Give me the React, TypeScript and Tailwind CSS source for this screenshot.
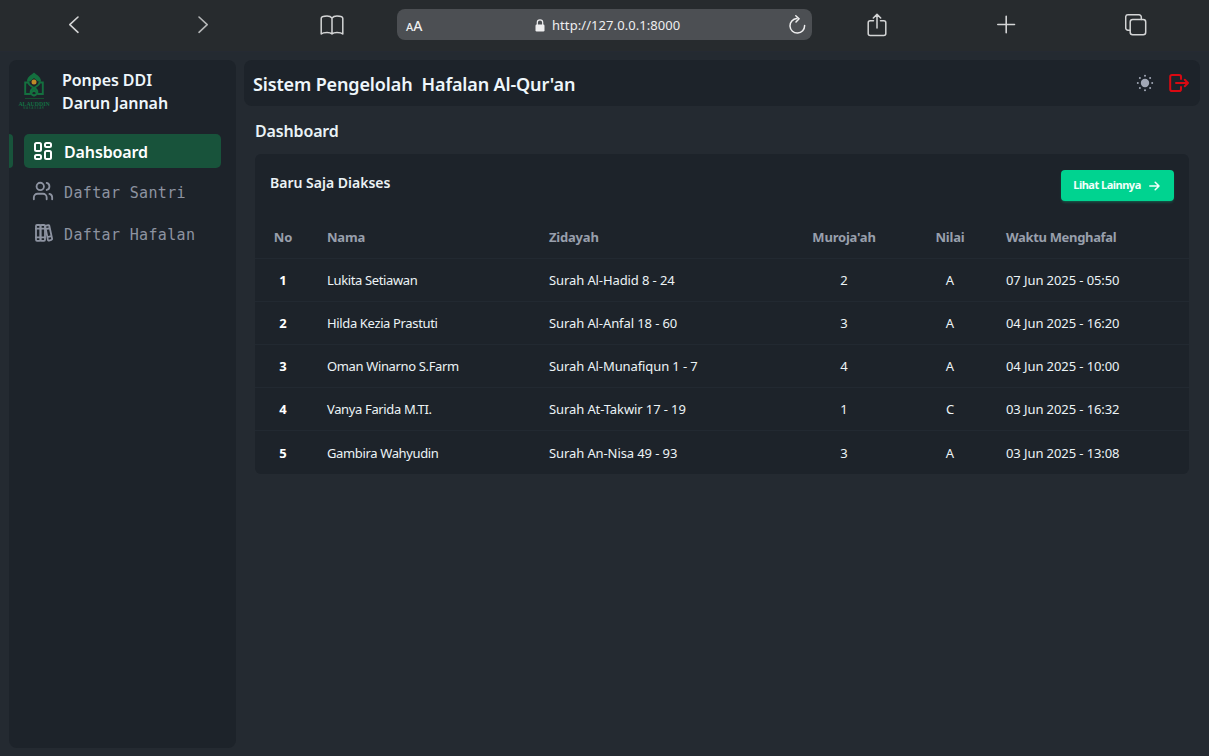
import React from "react";
import { Users } from "lucide-react";

type Row = { name: string; surah: string; repeat: number; grade: string; time: string };

const rows: Row[] = [
  { name: "Lukita Setiawan", surah: "Surah Al-Hadid 8 - 24", repeat: 2, grade: "A", time: "07 Jun 2025 - 05:50" },
  { name: "Hilda Kezia Prastuti", surah: "Surah Al-Anfal 18 - 60", repeat: 3, grade: "A", time: "04 Jun 2025 - 16:20" },
  { name: "Oman Winarno S.Farm", surah: "Surah Al-Munafiqun 1 - 7", repeat: 4, grade: "A", time: "04 Jun 2025 - 10:00" },
  { name: "Vanya Farida M.TI.", surah: "Surah At-Takwir 17 - 19", repeat: 1, grade: "C", time: "03 Jun 2025 - 16:32" },
  { name: "Gambira Wahyudin", surah: "Surah An-Nisa 49 - 93", repeat: 3, grade: "A", time: "03 Jun 2025 - 13:08" },
];

const line = { fill: "none", stroke: "currentColor", strokeLinecap: "round", strokeLinejoin: "round" } as const;

function BrowserBar() {
  return (
    <div className="flex h-[52px] shrink-0 items-center border-b border-[#252a33] bg-[#272b2e] pb-[2px] text-[#d4d5d6]">
      <svg className="ml-[64px] h-5 w-5" viewBox="0 0 20 20" strokeWidth="1.6" {...line}><path d="M14 2 5.800 9.700 14 17.300" /></svg>
      <svg className="ml-[109px] h-5 w-5 text-[#b5b7b8]" viewBox="0 0 20 20" strokeWidth="1.6" {...line}><path d="M6 2 14.200 9.700 6 17.300" /></svg>
      <svg className="ml-[107px] h-[22px] w-6" viewBox="0 0 24 22" strokeWidth="1.5" {...line}>
        <path d="M12 4C10.800 2.400 8.800 2 7 2 4.400 2 1.200 2.500 1.200 4.500v15.500C2.500 18.800 5 18.500 7 18.500s4 .4 5 1.500c1-1.100 3-1.500 5-1.500s4.500.3 5.800 1.500V4.500C22.800 2.500 19.600 2 17 2c-1.800 0-3.800.4-5 2Zm0 0v16" />
      </svg>
      <div className="ml-[53px] flex h-[31px] w-[415px] items-center rounded-[8px] bg-[#4c4f53] text-[#eeeeef]">
        <span className="ml-[9px] mt-[2px] flex w-[18px] items-baseline font-medium leading-none"><span className="text-[11px]">A</span><span className="text-[14px]">A</span></span>
        <svg className="ml-[111px] mt-[1px] h-[13px] w-[10px]" viewBox="0 0 10 13"><rect x=".5" y="5.500" width="9" height="7" rx="1.200" fill="currentColor" /><path d="M2.300 6V3.500a2.700 2.700 0 0 1 5.400 0V6" fill="none" stroke="currentColor" strokeWidth="1.200" /></svg>
        <span className="ml-[7px] mt-[2px] w-[130px] whitespace-nowrap text-[13px] tracking-[0.07px]">http://127.0.0.1:8000</span>
        <svg className="ml-auto mr-[5px] h-5 w-5" viewBox="0 0 20 20" strokeWidth="1.500" {...line}><path d="M9.800 3.500A7.300 7.300 0 1 0 17.600 10.500M8.800.8l3.300 2.900-3.100 3.200" /></svg>
      </div>
      <svg className="ml-[55px] h-6 w-5" viewBox="0 0 20 24" strokeWidth="1.500" {...line}><path d="M6.500 7.800H3.200a2 2 0 0 0-2 2v10.700a2 2 0 0 0 2 2h13.600a2 2 0 0 0 2-2V9.800a2 2 0 0 0-2-2h-3.300M10 15V1.500M6.300 5 10 1.400 13.700 5" /></svg>
      <svg className="ml-[109px] h-5 w-5" viewBox="0 0 20 20" strokeWidth="1.600" {...line}><path d="M1.800 9.500h16.700M10.200 1.300v16.500" /></svg>
      <svg className="ml-[109px] h-[22px] w-[22px]" viewBox="0 0 22 22" strokeWidth="1.500" {...line}><rect x="5.200" y="5.400" width="15.500" height="15.300" rx="2.500" /><path d="M5.200 16.200H3a2.300 2.300 0 0 1-2.300-2.300V3A2.300 2.300 0 0 1 3 .8h11a2.300 2.300 0 0 1 2.300 2.300v2.300" /></svg>
    </div>
  );
}

function Logo() {
  return (
    <div className="relative h-[39px] w-[30px] shrink-0 leading-none">
      <svg className="ml-[5px] h-[25px] w-[20px]" viewBox="0 0 20 25">
        <path d="M10 .5C13 3.500 17 4.500 17 9.500h-3L10 6 6 9.500H3C3 4.500 7 3.500 10 .5Z" fill="#14703f" />
        <g fill="none" stroke="#14703f" strokeWidth="1.900">
          <path d="M4.500 10.500H1.200V22H6l4-4.200 4 4.200h4.800V10.500h-3.300" />
          <path d="M4.200 9.500c0 5 5.800 4.500 5.800 8M15.800 9.500c0 5-5.800 4.500-5.800 8" />
          <path d="M10 15.500c-4.500 3-4.500 6 0 8.200 4.500-2.200 4.500-5.200 0-8.200Z" />
        </g>
        <circle cx="10" cy="10" r="2.500" fill="#c08a28" />
      </svg>
      <div className="mx-auto mt-[1px] h-px w-[19px] bg-[#16502f]" />
      <svg className="mt-px h-[10px] w-[30px] overflow-visible" viewBox="0 0 30 10">
        <text x="15" y="5.500" textAnchor="middle" fontFamily="Liberation Serif, serif" fontSize="5.800" fontWeight="700" fill="#147044">ALAUDDIN</text>
        <text x="15" y="9" textAnchor="middle" fontFamily="Liberation Sans, sans-serif" fontSize="2.600" letterSpacing=".9" fill="#177045">MAKASSAR</text>
      </svg>
    </div>
  );
}

function Sun() {
  return (
    <svg className="h-[18px] w-[18px] text-[#a1a7b5]" viewBox="0 0 18 18" fill="currentColor">
      <circle cx="9" cy="9" r="4.200" />
      <circle cx="9" cy="1.800" r="1" /><circle cx="9" cy="16.200" r="1" /><circle cx="1.800" cy="9" r="1" /><circle cx="16.200" cy="9" r="1" />
      <circle cx="3.900" cy="3.900" r="1" /><circle cx="14.100" cy="3.900" r="1" /><circle cx="3.900" cy="14.100" r="1" /><circle cx="14.100" cy="14.100" r="1" />
    </svg>
  );
}

function Sidebar() {
  return (
    <aside className="flex h-[688px] w-[227px] shrink-0 flex-col rounded-lg bg-[#1d232a]">
      <div className="flex h-[66px] items-start pl-[10px] pt-[12px]">
        <Logo />
        <div className="-mt-[3px] ml-[13px] whitespace-nowrap text-[16px] font-semibold leading-[23px] tracking-[-0.07px] text-[#eef6fb]">
          <div>Ponpes DDI</div>
          <div>Darun Jannah</div>
        </div>
      </div>
      <nav className="mt-[8px] flex flex-col whitespace-nowrap text-[#8d93a1]">
        <div className="flex h-[34px]">
          <span className="w-[4px] rounded-r bg-[#18533b]" />
          <div className="ml-[11px] flex w-[197px] items-center rounded-[5px] bg-[#18533b] text-white">
            <svg className="ml-[10px] h-[18px] w-[18px]" viewBox="0 0 18 18" fill="none" stroke="currentColor" strokeWidth="2"><rect x="1" y="1" width="6" height="8" rx="1.500" /><rect x="11" y="1" width="6" height="4" rx="1.500" /><rect x="1" y="13" width="6" height="4" rx="1.500" /><rect x="11" y="9" width="6" height="8" rx="1.500" /></svg>
            <span className="ml-[12px] mt-[1px] text-[16px] font-semibold tracking-[-0.12px]">Dahsboard</span>
          </div>
        </div>
        <div className="flex h-[42px] items-center pl-[23px] pt-[5px]">
          <Users className="-mt-[2px] h-[22px] w-[22px]" strokeWidth={2} />
          <span className="ml-[10px] mt-[3px] font-['DejaVu_Sans_Mono',monospace] text-[15px] tracking-[0.35px]">Daftar Santri</span>
        </div>
        <div className="flex h-[42px] items-center pl-[26px] pt-[5px]">
          <svg className="-mt-[2px] h-[18px] w-[18px]" viewBox="0 0 18 18" strokeWidth="1.800" {...line}>
            <rect x="1" y="1" width="4.500" height="15.800" rx="1" /><rect x="5.500" y="1" width="4.500" height="15.800" rx="1" />
            <path d="m10.200 1.900 3-.8a.9.900 0 0 1 1.100.6l2.800 13.100a.9.900 0 0 1-.7 1l-2.400.8a.9.900 0 0 1-1.100-.7ZM1 4.700h9M1 13.300h9m.9-8.200 4-1m-2.500 9 4-1" />
          </svg>
          <span className="ml-[11px] mt-[3px] font-['DejaVu_Sans_Mono',monospace] text-[15px] tracking-[0.35px]">Daftar Hafalan</span>
        </div>
      </nav>
    </aside>
  );
}

function RecentTable() {
  return (
    <section className="ml-[11px] mt-[11px] flex h-[320px] w-[934px] flex-col overflow-hidden rounded-md bg-[#1d232a]">
      <div className="flex h-[62px] justify-between pl-[15px] pr-[15px] pt-[16px]">
        <h3 className="whitespace-nowrap text-[14px] font-semibold leading-[25px] text-[#ecf2f5]">Baru Saja Diakses</h3>
        <button className="flex h-[31px] w-[113px] items-center justify-center gap-[8px] rounded-[4px] bg-[#00d390] pr-[2px] text-[11px] font-bold text-[#f2fffb] shadow-[0_2px_3px_-1px_#00d39066]">
          <span className="whitespace-nowrap tracking-[-0.5px]">Lihat Lainnya</span>
          <svg className="h-[10px] w-[11px]" viewBox="0 0 11 10" strokeWidth="1.500" {...line}><path d="M.8 5h9M6.200 1.200 10 5 6.200 8.800" /></svg>
        </button>
      </div>
      <table className="w-[934px] table-fixed border-collapse whitespace-nowrap text-left text-[13px] leading-[18px] text-[#ecf3f6]">
        <colgroup>
          <col className="w-[56px]" /><col className="w-[222px]" /><col className="w-[245px]" /><col className="w-[132px]" /><col className="w-[80px]" /><col />
        </colgroup>
        <thead>
          <tr className="h-[42px] border-b border-[#222931] tracking-[-0.2px] text-[#989fac]">
            <th className="text-center">No</th><th className="pl-4">Nama</th><th className="pl-4">Zidayah</th><th className="text-center">Muroja'ah</th><th className="text-center">Nilai</th><th className="pl-4 tracking-[-0.33px]">Waktu Menghafal</th>
          </tr>
        </thead>
        <tbody>
          {rows.map((r, i) => (
            <tr key={r.name} className="h-[43.2px] border-b border-[#222931] last:border-b-0">
              <th className="text-center text-white">{i + 1}</th>
              <td className="pl-4 tracking-[-0.36px]">{r.name}</td>
              <td className="pl-4 tracking-[-0.1px]">{r.surah}</td>
              <td className="text-center">{r.repeat}</td>
              <td className="text-center">{r.grade}</td>
              <td className="pl-4 tracking-[-0.09px]">{r.time}</td>
            </tr>
          ))}
        </tbody>
      </table>
    </section>
  );
}

export default function App() {
  return (
    <div className="flex h-[756px] w-[1209px] flex-col overflow-hidden bg-[#242a31] font-['Noto_Sans','Open_Sans',sans-serif]">
      <BrowserBar />
      <div className="flex pl-[9px] pt-[8px]">
        <Sidebar />
        <main className="ml-[8px] flex w-[956px] flex-col">
          <header className="flex h-[46px] items-center rounded-lg bg-[#1d232a] pl-[9px] pr-[11px]">
            <h1 className="mt-[2px] whitespace-pre text-[18px] font-semibold tracking-[-0.14px] text-[#eef6fb]">{"Sistem Pengelolah  Hafalan Al-Qur'an"}</h1>
            <div className="ml-auto flex items-center gap-[15px]">
              <Sun />
              <svg className="h-5 w-5 text-[#d90912]" viewBox="0 0 20 20" strokeWidth="2" {...line}><path d="M12 6V3.800A1.800 1.800 0 0 0 10.200 2H3a1.800 1.800 0 0 0-1.800 1.800v12.400A1.800 1.800 0 0 0 3 18h7.200a1.800 1.800 0 0 0 1.800-1.800V14M7 10h12M15.800 6.700 19 10l-3.200 3.300" /></svg>
            </div>
          </header>
          <h2 className="ml-[11px] mt-[14px] whitespace-nowrap text-[16px] font-semibold leading-[23px] tracking-[-0.15px] text-[#e9f2f6]">Dashboard</h2>
          <RecentTable />
        </main>
      </div>
    </div>
  );
}
